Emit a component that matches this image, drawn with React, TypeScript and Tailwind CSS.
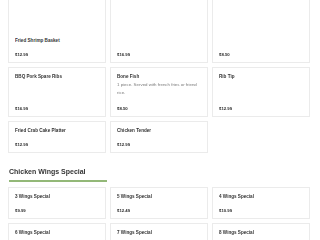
import React from "react";

type Item = { title?: string; desc?: string; price: string; spacer?: boolean; empty?: boolean };

function Card({ item }: { item: Item }) {
  if (item.empty) return <div />;
  return (
    <div className="flex flex-col border border-[#ebebeb] bg-white pl-[6px] pr-[6px] pt-[6px] pb-[4px]">
      {item.spacer && <div className="h-[58px]" />}
      <div className="text-[4.6px] leading-[6px] font-bold text-[#333333] whitespace-nowrap overflow-hidden">
        {item.title}
      </div>
      {item.desc && (
        <div className="mt-px mb-px text-[4.4px] leading-[8px] text-[#7a7a7a]">{item.desc}</div>
      )}
      <div className="mt-auto pt-2 text-[4.3px] leading-[6px] font-bold text-[#2a2a2a]">{item.price}</div>
    </div>
  );
}

const entrees: Item[] = [
  { title: "Fried Shrimp Basket", price: "$12.99", spacer: true },
  { title: "Fried Fish Basket", price: "$16.99" },
  { title: "Fish Nuggets", desc: "2 pieces. Served with french fries or friend rice and coleslaw.", price: "$8.50" },
  { title: "BBQ Pork Spare Ribs", price: "$16.99" },
  { title: "Bone Fish", desc: "1 piece. Served with french fries or friend rice.", price: "$8.50" },
  { title: "Rib Tip", price: "$12.99" },
  { title: "Fried Crab Cake Platter", price: "$12.99" },
  { title: "Chicken Tender", price: "$12.99" },
];

const wings: Item[] = [
  { title: "3 Wings Special", price: "$9.99" },
  { title: "5 Wings Special", price: "$12.49" },
  { title: "4 Wings Special", price: "$10.99" },
  { title: "6 Wings Special", price: "$14.99" },
  { title: "7 Wings Special", price: "$15.99" },
  { title: "8 Wings Special", price: "$16.99" },
];

export default function App() {
  return (
    <div className="h-[240px] w-[320px] overflow-hidden bg-white">
      <div
        className="h-[240px] w-[320px] pl-2 pr-[10px] antialiased opacity-[0.995]"
        style={{ fontFamily: '"Liberation Sans", Arial, sans-serif' }}
      >
        <div className="-mt-[27px] grid grid-cols-3 gap-1">
          {entrees.map((it, i) => (
            <Card key={i} item={it} />
          ))}
        </div>
        <div className="mt-[15px] pl-px">
          <div className="text-[7px] leading-[8px] font-bold text-[#333333]">Chicken Wings Special</div>
          <div className="mt-[4px] h-[2px] w-[98px] bg-[#93b877]" />
        </div>
        <div className="mt-[5px] grid grid-cols-3 gap-1">
          {wings.map((it, i) => (
            <Card key={i} item={it} />
          ))}
        </div>
      </div>
    </div>
  );
}
